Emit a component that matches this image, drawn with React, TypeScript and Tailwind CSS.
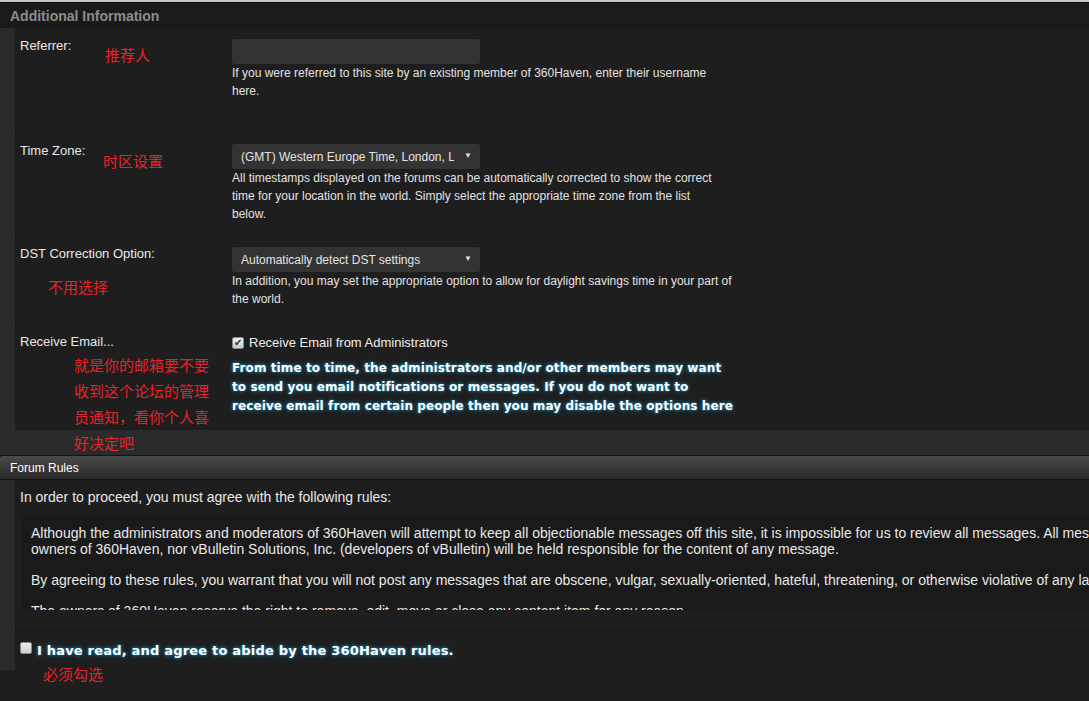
import React from "react";

const red = "text-[#e8222a] text-[15px] leading-[15px] font-['Noto_Sans_CJK_SC',sans-serif]";
const glow =
  "text-white font-bold font-['DejaVu_Sans',sans-serif] [text-shadow:0_0_4px_#2196c9,0_0_2px_#0d5f86]";

function Select({ value }: { value: string }) {
  return (
    <div className="relative flex h-[25px] w-[248px] items-center overflow-hidden rounded-[3px] bg-[#333333] pl-[9px] pr-[26px] text-[12px] text-[#e4e4e4]">
      <span className="whitespace-nowrap overflow-hidden">{value}</span>
      <span className="absolute right-[8px] top-[8px] text-[8px] leading-[8px] text-[#dddddd]">▼</span>
    </div>
  );
}

function Help({ children, w = "max-w-[500px]" }: { children: React.ReactNode; w?: string }) {
  return <p className={`${w} text-[12px] leading-[18px] text-[#e2e2e2]`}>{children}</p>;
}

function Row({
  label,
  h,
  note,
  children,
}: {
  label: string;
  h: string;
  note?: React.ReactNode;
  children: React.ReactNode;
}) {
  return (
    <div className={`relative grid grid-cols-[217px_1fr] border-b border-[#181818] pt-[10px] ${h}`}>
      <div className="pl-[5px] text-[13px] leading-[16px] text-[#e8e8e8]">{label}</div>
      <div className="pt-[1px]">{children}</div>
      {note}
    </div>
  );
}

export default function App() {
  return (
    <div className="min-h-[701px] w-[1089px] overflow-hidden bg-[#1e1e1e] font-['Liberation_Sans',Arial,sans-serif]">
      <div className="h-[2px] bg-[#c4c4c4]" />
      <div className="h-[1px] bg-[#0f0f0f]" />
      <div className="flex h-[25px] items-center bg-[#1a1a1a] px-[10px] pt-[2px] text-[14px] font-bold text-[#8c8c8c]">
        Additional Information
      </div>

      {/* additional info rows */}
      <div className="bg-[#2b2b2b] pb-[25px]">
        <div className="ml-[15px] bg-[#1e1e1e]">
          <Row
            label="Referrer:"
            h="h-[105px]"
            note={<span className={`absolute left-[90px] top-[19px] ${red}`}>推荐人</span>}
          >
            <div className="h-[25px] w-[248px] rounded-[3px] bg-[#333333]" />
            <Help>If you were referred to this site by an existing member of 360Haven, enter their username here.</Help>
          </Row>
          <Row
            label="Time Zone:"
            h="h-[103px]"
            note={<span className={`absolute left-[88px] top-[20px] ${red}`}>时区设置</span>}
          >
            <Select value="(GMT) Western Europe Time, London, Lisbon, Casablanca" />
            <Help w="max-w-[488px]">
              All timestamps displayed on the forums can be automatically corrected to show the correct time for your
              location in the world. Simply select the appropriate time zone from the list below.
            </Help>
          </Row>
          <Row
            label="DST Correction Option:"
            h="h-[88px]"
            note={<span className={`absolute left-[33px] top-[43px] ${red}`}>不用选择</span>}
          >
            <Select value="Automatically detect DST settings" />
            <Help>
              In addition, you may set the appropriate option to allow for daylight savings time in your part of the
              world.
            </Help>
          </Row>
          <Row
            label="Receive Email..."
            h="h-[106px] border-b-0"
            note={
              <div className={`absolute left-[59px] top-[33px] flex flex-col gap-[11px] ${red}`}>
                <span>就是你的邮箱要不要</span>
                <span>收到这个论坛的管理</span>
                <span>员通知，看你个人喜</span>
                <span>好决定吧</span>
              </div>
            }
          >
            <div className="flex items-center gap-[5px] text-[13px] leading-[16px] text-[#eeeeee]">
              <span className="flex h-[12px] w-[12px] items-center justify-center rounded-[2px] border border-[#8a8a8a] bg-gradient-to-b from-[#f0f0f0] to-[#c8c8c8] text-[10px] leading-none text-[#333]">
                ✔
              </span>
              Receive Email from Administrators
            </div>
            <p className={`mt-[8px] max-w-[503px] text-[12px] leading-[19px] tracking-[0.1px] ${glow}`}>
              From time to time, the administrators and/or other members may want to send you email notifications or
              messages. If you do not want to receive email from certain people then you may disable the options here
            </p>
          </Row>
        </div>
      </div>

      {/* forum rules */}
      <div className="flex h-[25px] items-center rounded-tl-[3px] border-y border-[#141414] bg-gradient-to-b from-[#4a4a4a] to-[#292929] px-[10px] text-[12px] text-white">
        Forum Rules
      </div>
      <div className="bg-[#2b2b2b]">
        <div className="relative ml-[15px] bg-[#1e1e1e]">
          <div className="border-b border-[#181818] pb-[21px] pt-[9px]">
            <p className="pl-[5px] text-[14px] leading-[16px] text-[#e8e8e8]">
              In order to proceed, you must agree with the following rules:
            </p>
            <div className="ml-[7px] mt-[10px] h-[95px] overflow-hidden whitespace-nowrap bg-[#1a1a1a] pl-[9px] pt-[10px] text-[14px] leading-[16px] text-[#e8e8e8]">
              <p>
                Although the administrators and moderators of 360Haven will attempt to keep all objectionable messages
                off this site, it is impossible for us to review all messages. All messages express the views of the
                author,
                <br />
                owners of 360Haven, nor vBulletin Solutions, Inc. (developers of vBulletin) will be held responsible for
                the content of any message.
              </p>
              <p className="mt-[15px]">
                By agreeing to these rules, you warrant that you will not post any messages that are obscene, vulgar,
                sexually-oriented, hateful, threatening, or otherwise violative of any laws.
              </p>
              <p className="mt-[15px]">
                The owners of 360Haven reserve the right to remove, edit, move or close any content item for any reason.
              </p>
            </div>
          </div>
          <div className="flex h-[38px] items-start gap-[5px] pl-[5px] pt-[10px]">
            <span className="h-[12px] w-[12px] rounded-[2px] border border-[#8a8a8a] bg-gradient-to-b from-[#f0f0f0] to-[#cfcfcf]" />
            <span className={`mt-[1px] text-[13px] leading-[16px] tracking-[0.2px] ${glow}`}>
              I have read, and agree to abide by the 360Haven rules.
            </span>
          </div>
          <span className={`absolute left-[28px] top-[186px] ${red}`}>必须勾选</span>
        </div>
      </div>
    </div>
  );
}
